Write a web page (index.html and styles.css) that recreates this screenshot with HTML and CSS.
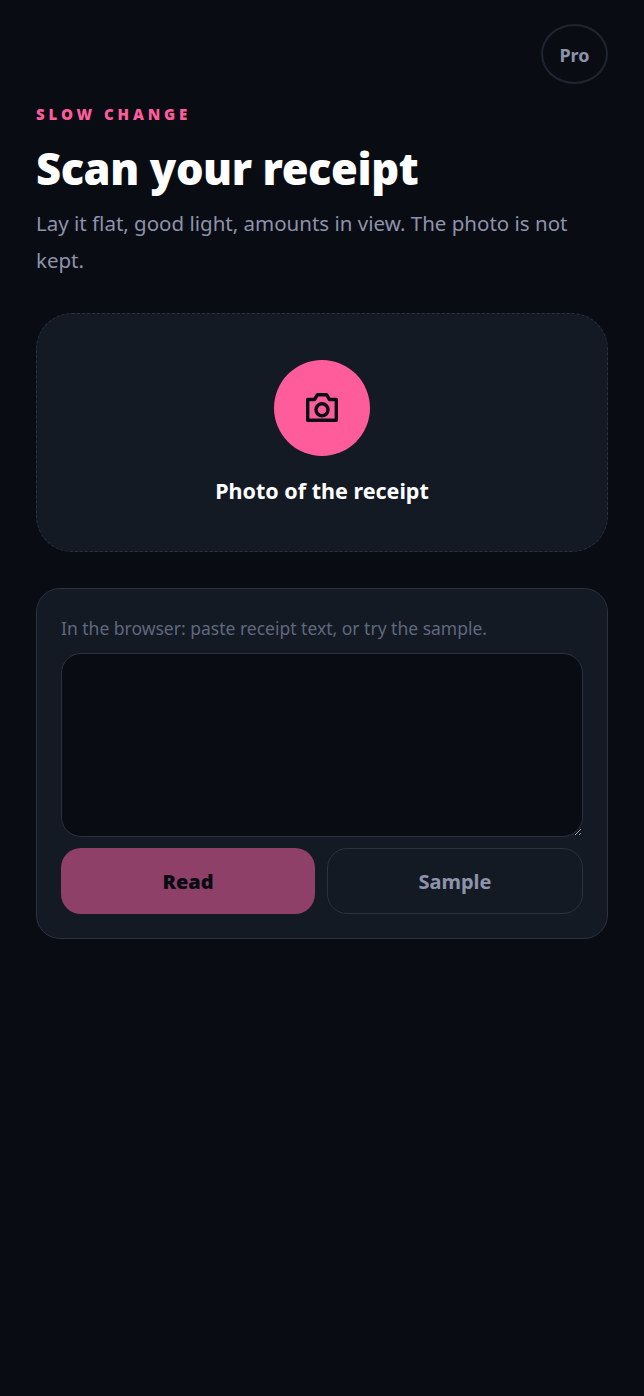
FILE: index.html
```html
<!DOCTYPE html>
<html lang="en">
<head>
<meta charset="utf-8">
<title>Scan your receipt</title>
<link rel="stylesheet" href="styles.css">
</head>
<body>
<main class="page">
  <div class="top"><button class="pro">Pro</button></div>
  <p class="eyebrow">SLOW CHANGE</p>
  <h1 class="title">Scan your receipt</h1>
  <p class="lead">Lay it flat, good light, amounts in view. The photo is not kept.</p>
  <section class="drop">
    <span class="disc">
      <svg class="cam" viewBox="0 0 32 29" width="32" height="29" fill="none" stroke="#0a0c14" stroke-width="3.4">
        <path d="M1.700 27.300V6.500H8.500L11.500 1.700H20.500L23.500 6.500H30.300V27.300Z" stroke-linejoin="round"/>
        <circle cx="16" cy="16.800" r="6"/>
      </svg>
    </span>
    <span class="drop-label">Photo of the receipt</span>
  </section>
  <section class="panel">
    <p class="hint">In the browser: paste receipt text, or try the sample.</p>
    <textarea class="area"></textarea>
    <div class="actions">
      <button class="btn read">Read</button>
      <button class="btn sample">Sample</button>
    </div>
  </section>
</main>
</body>
</html>
```
FILE: styles.css
```css
* { box-sizing: border-box; }
html { color-scheme: dark; }
html, body { margin: 0; padding: 0; background: #0a0c14; }
body { font-family: "Noto Sans", sans-serif; color: #fff; min-height: 1396px; }
.page { padding: 24px 36px; }
.top { display: flex; justify-content: flex-end; height: 60px; }
.pro { width: 67px; height: 60px; border-radius: 50%; border: 2px solid #1f2530; background: transparent; color: #8d93aa; font: 700 18px "Noto Sans", sans-serif; padding: 2px 0 0; }
.eyebrow { margin: 20px 0 0; font: 900 15px/20px "Noto Sans", sans-serif; letter-spacing: 3.9px; color: #ff5c9c; }
.title { margin: 20px 0 0; font: 900 43.400px/50px "Noto Sans", sans-serif; letter-spacing: -0.4px; color: #fff; }
.lead { margin: 11px 0 0; font: 400 20.500px/37px "Noto Sans", sans-serif; color: #8d93aa; }
.drop { margin-top: 34px; height: 239px; border: 1.5px dashed #2a3240; border-radius: 36px; background: #141a24; display: flex; flex-direction: column; align-items: center; padding-top: 45.500px; }
.disc { width: 96px; height: 96px; border-radius: 50%; background: #ff5c9c; display: flex; align-items: center; justify-content: center; }
.drop-label { margin-top: 20px; font: 700 21.500px/30px "Noto Sans", sans-serif; color: #fff; }
.panel { margin-top: 36px; height: 351px; border: 1.500px solid #2a3240; border-radius: 24px; background: #141a24; padding: 24px; }
.hint { margin: 0; font: 400 17.500px/30px "Noto Sans", sans-serif; color: #5f687e; }
.area { display: block; width: 100%; height: 184px; margin-top: 10px; background: #0a0c14; border: 1.500px solid #2a3240; border-radius: 20px; outline: none; }
.actions { display: flex; gap: 12px; margin-top: 11px; }
.btn { flex: 1; height: 66px; border-radius: 20px; font: 800 20px "Noto Sans", sans-serif; padding: 0; }
.read { background: #8f4068; border: 0; color: #0a0c14; font-weight: 900; }
.sample { background: #141a24; border: 1.500px solid #2a3240; color: #8d93aa; font-weight: 700; }
```
